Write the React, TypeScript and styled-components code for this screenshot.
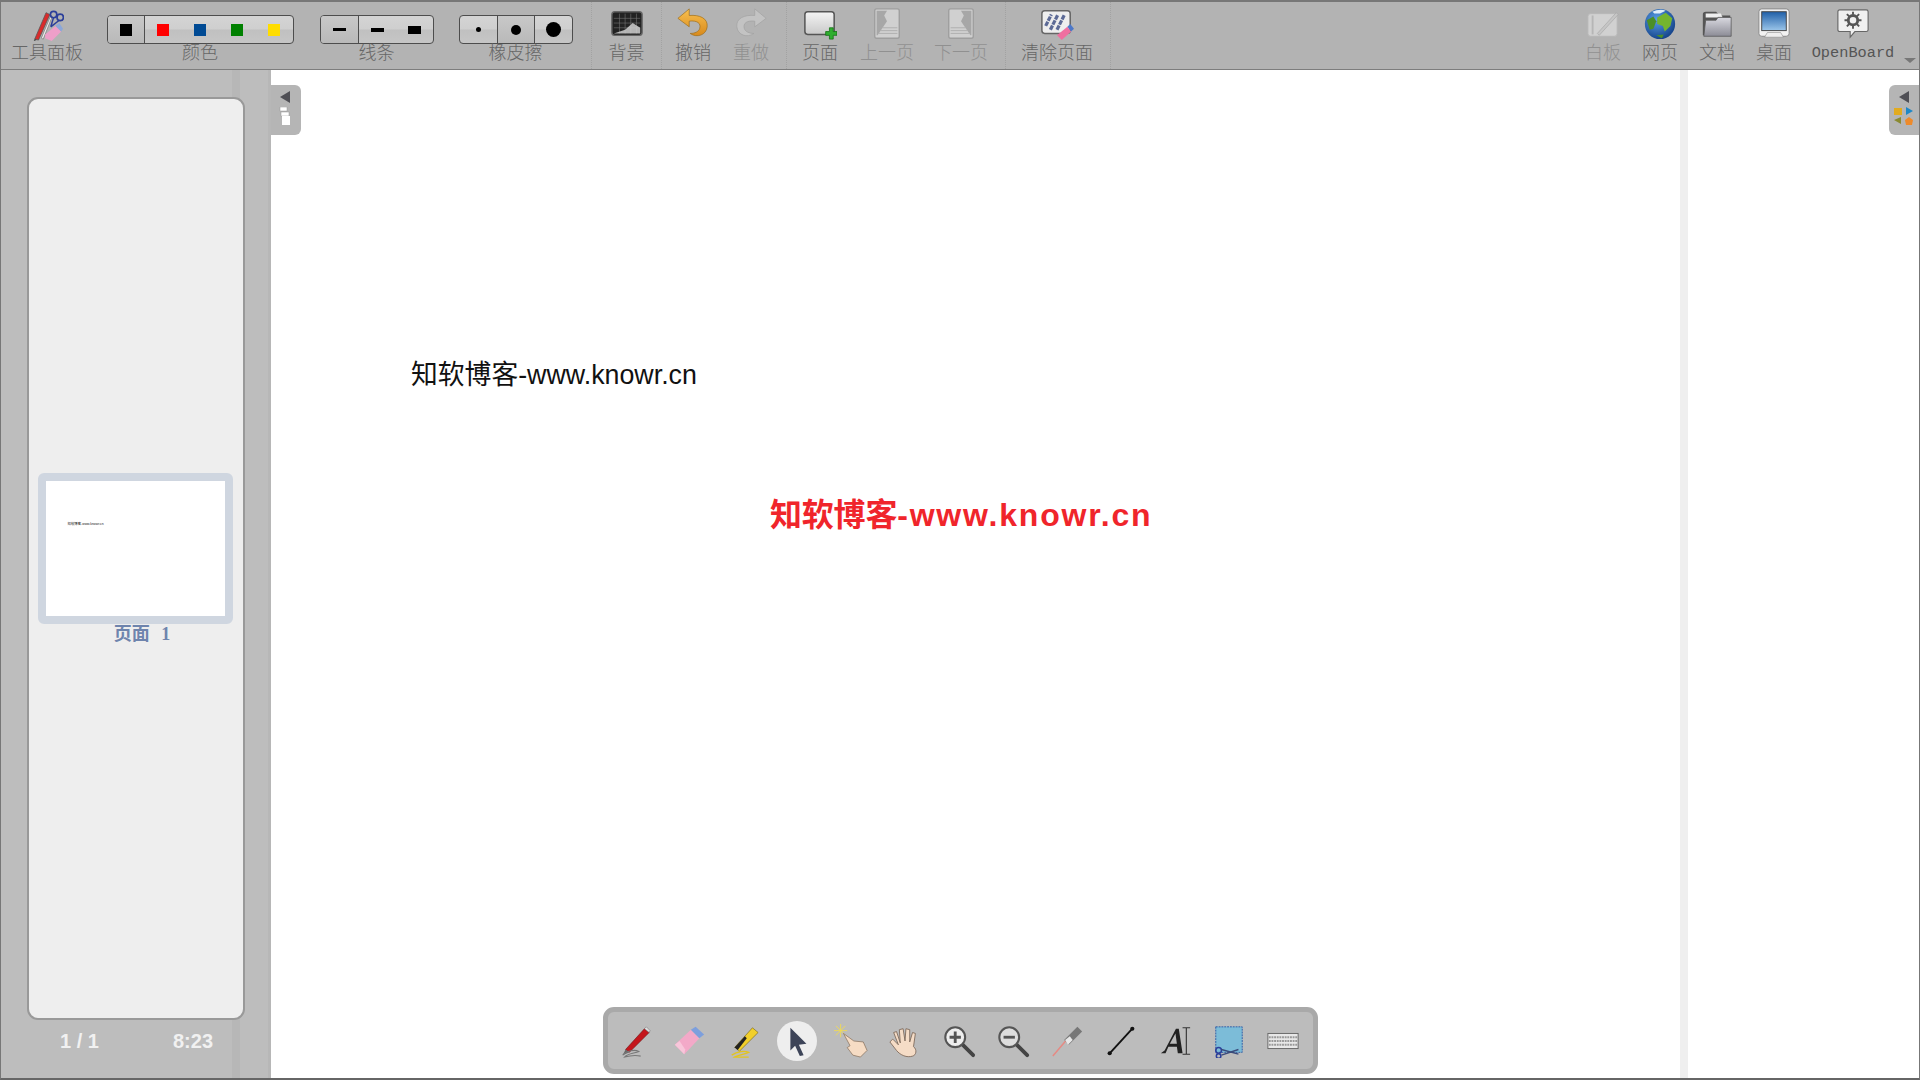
import React from "react";
import styled, { createGlobalStyle } from "styled-components";

const Global = createGlobalStyle`
  html, body { margin: 0; padding: 0; background: #fff; }
  #root { width: 1920px; height: 1080px; }
`;

const Page = styled.div`
  width: 1920px; height: 1080px; box-sizing: border-box; overflow: hidden;
  display: flex; flex-direction: column; position: relative;
  border-left: 1px solid #777; border-right: 1px solid #777; border-bottom: 2px solid #666;
  font-family: "Liberation Serif", "Noto Sans CJK SC", serif;
`;
const TopBar = styled.header`
  height: 70px; flex: none; box-sizing: border-box; display: flex;
  background: #b3b3b3; border-top: 2px solid #777; border-bottom: 1px solid #7d7d7d;
`;
const Section = styled.div<{ $dotted?: boolean; $push?: boolean; $end?: number; $close?: boolean }>`
  display: flex; height: 100%;
  margin-left: ${p => (p.$push ? "auto" : "0")};
  padding-right: ${p => p.$end ?? 0}px;
  border-left: ${p => (p.$dotted ? "1px dotted #a2a2a2" : "0")};
  border-right: ${p => (p.$close ? "1px dotted #a2a2a2" : "0")};
`;
const Tool = styled.div<{ $w: number; $off?: boolean }>`
  width: ${p => p.$w}px; flex: none; display: flex; flex-direction: column; align-items: center;
  opacity: ${p => (p.$off ? 0.45 : 1)};
`;
const IconSlot = styled.div`
  height: 32px; padding-top: 6px; display: flex; align-items: center; justify-content: center;
`;
const Label = styled.span`
  font-size: 18px; line-height: 24px; font-weight: 300; color: #666; white-space: nowrap; margin-top: 1px;
`;
const GroupLabel = styled(Label)`
  margin-top: -3px;
`;
const MonoLabel = styled(Label)`
  font-family: "Liberation Mono", monospace; font-size: 15.3px; color: #555;
`;
const GroupTool = styled(Tool)`
  padding-top: 13px; box-sizing: border-box;
`;
const Segmented = styled.div`
  height: 29px; flex: none; box-sizing: border-box; display: flex; border: 1px solid #4d4d4d; border-radius: 4px; overflow: hidden;
  background: linear-gradient(#d4d4d4 0, #cfcfcf 48%, #c0c0c0 52%, #c6c6c6 100%);
`;
const Cell = styled.div<{ $w: number; $on?: boolean; $line?: boolean }>`
  width: ${p => p.$w}px; display: flex; align-items: center; justify-content: center; box-sizing: border-box;
  border-right: ${p => (p.$line ? "1px solid #4d4d4d" : "0")};
  background: ${p => (p.$on ? "linear-gradient(#c8c8c8, #b9b9b9)" : "none")};
`;
const Swatch = styled.i<{ $c: string }>`
  display: block; width: 12px; height: 12px; background: ${p => p.$c};
`;
const Stroke = styled.i<{ $h: number }>`
  display: block; width: 13px; height: ${p => p.$h}px; background: #000;
`;
const Dot = styled.i<{ $s: number }>`
  display: block; width: ${p => p.$s}px; height: ${p => p.$s}px; background: #000; border-radius: 50%;
`;
const Caret = styled.div`
  width: 16px; padding-top: 56px; box-sizing: border-box;
  &::after { content: ""; display: block; width: 0; height: 0; margin-left: 1px;
    border-left: 6px solid transparent; border-right: 6px solid transparent; border-top: 5px solid #777; }
`;
const Body = styled.div`
  flex: 1; display: flex; min-height: 0; position: relative;
`;
const Sidebar = styled.aside`
  width: 270px; flex: none; box-sizing: border-box; padding: 27px 0 0 26px; display: flex; flex-direction: column;
  background: linear-gradient(90deg, #bdbdbd 231px, #b7b7b7 231px 239px, #bdbdbd 239px 267px, #b7b7b7 267px);
`;
const ThumbPanel = styled.div`
  width: 218px; height: 923px; flex: none; box-sizing: border-box; display: flex; flex-direction: column; align-items: center; justify-content: center;
  background: #eee; border: 2px solid #999; border-radius: 11px;
`;
const Thumb = styled.div`
  width: 195px; height: 151px; box-sizing: border-box; position: relative; background: #fff;
  border: 8px solid #cfd6e0; border-radius: 6px; margin-right: 2px;
`;
const ThumbText = styled.span`
  position: absolute; left: 22px; top: 41px; font-family: "Liberation Sans", "Noto Sans CJK SC", sans-serif; font-size: 3.4px; line-height: 5px; color: #222; white-space: nowrap;
`;
const ThumbLabel = styled.span`
  font-size: 18px; line-height: 20px; font-weight: 700; color: #6e84ad; margin: 0 0 0 12px; word-spacing: 7px;
`;
const Pager = styled.div`
  flex: 1; display: flex; align-items: center; font-family: "Liberation Sans", sans-serif; font-weight: 700; font-size: 20px; color: #f1f1f1; padding-bottom: 16px;
`;
const PagerLeft = styled.span`
  width: 146px; padding-left: 33px; box-sizing: border-box; white-space: nowrap;
`;
const Canvas = styled.main`
  flex: 1; background: #fff; position: relative; overflow: hidden;
`;
const Gutter = styled.div`
  position: absolute; left: 1409px; top: 0; bottom: 0; width: 8px; background: #efefef;
`;
const CanvasText = styled.div`
  position: absolute; left: 140px; top: 287px; font-family: "Liberation Sans", "Noto Sans CJK SC", sans-serif; font-size: 26.8px; line-height: 36px; color: #111; white-space: nowrap;
`;
const Watermark = styled.div`
  position: absolute; left: 499px; top: 423px; font-family: "DejaVu Sans", "Noto Sans CJK SC", sans-serif; font-weight: 700; font-size: 32px; line-height: 44px; letter-spacing: -0.2px; color: #f0252b; white-space: nowrap;
`;
const WatermarkLatin = styled.span`
  font-family: "Liberation Sans", sans-serif; letter-spacing: 1.8px;
`;
const Handle = styled.div<{ $side: "left" | "right" }>`
  position: absolute; top: 15px; width: 30px; height: 50px; box-sizing: border-box; background: #b5b5b5;
  display: flex; flex-direction: column; align-items: center; padding-top: 6px; gap: 4px;
  ${p => (p.$side === "left" ? "left: 270px; padding-right: 2px; border-radius: 0 6px 6px 0;" : "right: 0; border-radius: 6px 0 0 6px;")}
`;
const Palette = styled.div`
  position: absolute; left: 602px; top: 937px; width: 715px; height: 67px; box-sizing: border-box;
  display: flex; align-items: center;
  background: #bcbcbc; border: 5px solid #a9a9a9; border-radius: 11px;
`;
const PaletteButton = styled.div<{ $on?: boolean }>`
  width: 54px; height: 40px; flex: none; display: flex; align-items: center; justify-content: center; position: relative;
  &::before { content: ""; display: ${p => (p.$on ? "block" : "none")}; position: absolute; left: 7px; top: 0; width: 40px; height: 40px; border-radius: 50%; background: #eee; }
  & > svg { position: relative; }
`;

const Ico = ({ s = 34, children }: { s?: number; children: React.ReactNode }) => (
  <svg width={s} height={s} viewBox="0 0 36 36" fill="none">{children}</svg>
);

const Defs = () => (
  <svg width="0" height="0" style={{ position: "absolute" }}>
    <defs>
      <linearGradient id="paper" x1="0" y1="0" x2="0" y2="1"><stop offset="0" stopColor="#f4f4f4" /><stop offset="1" stopColor="#c9c9c9" /></linearGradient>
      <linearGradient id="screen" x1="0" y1="0" x2="0" y2="1"><stop offset="0" stopColor="#1f5fa8" /><stop offset="1" stopColor="#9cc6ea" /></linearGradient>
      <linearGradient id="folder" x1="0" y1="0" x2="0" y2="1"><stop offset="0" stopColor="#d9d9e0" /><stop offset="1" stopColor="#8c8c96" /></linearGradient>
      <linearGradient id="undo" x1="0" y1="0" x2="0" y2="1"><stop offset="0" stopColor="#f8c050" /><stop offset="1" stopColor="#d98a1c" /></linearGradient>
      <radialGradient id="globe" cx=".4" cy=".35" r=".7"><stop offset="0" stopColor="#5aa0e8" /><stop offset="1" stopColor="#123f86" /></radialGradient>
    </defs>
  </svg>
);

const IToolbox = () => (
  <Ico>
    <path d="M5 34 L17 6 L21 8 L9 35 Z" fill="#d92b2b" stroke="#555" strokeWidth=".8" />
    <path d="M5 34 L4 36 L7 35 Z" fill="#333" />
    <path d="M12 33 L22 9 L23.5 10 L14 34 Z" fill="#eee" stroke="#666" strokeWidth=".6" />
    <circle cx="25" cy="8" r="3.4" stroke="#2b3f9a" strokeWidth="1.8" />
    <circle cx="32" cy="11" r="3.4" stroke="#2b3f9a" strokeWidth="1.8" />
    <path d="M25 11 L22 21 M31 14 L22 21" stroke="#2b3f9a" strokeWidth="1.6" />
    <path d="M16 29 L27 20 L33 26 L23 36 L16 33 Z" fill="#ee9fc9" />
    <path d="M27 20 L31 17 L35 23 L33 26 Z" fill="#8ba7d9" />
  </Ico>
);
const IBackground = () => (
  <Ico>
    <rect x="2" y="5" width="32" height="25" rx="3" fill="#222" stroke="#666" strokeWidth="1.5" />
    <path d="M4 12 H32 M4 17 H32 M4 22 H32 M10 7 V28 M16 7 V28 M22 7 V28 M28 7 V28" stroke="#777" strokeWidth=".6" />
    <path d="M4 28 L16 24 L24 17 L32 22 V28 Z" fill="#cfcfcf" opacity=".85" />
  </Ico>
);
const IUndo = () => (
  <Ico>
    <path d="M14 2 L2 12 L14 21 V15 C22 14 27 17 25 23 C24 26 20 28 15 28 C22 33 32 30 33 21 C34 12 25 8 14 9 Z" fill="url(#undo)" stroke="#9a6a18" strokeWidth=".7" />
  </Ico>
);
const IRedo = () => (
  <Ico>
    <path d="M22 2 L34 12 L22 21 V15 C14 14 9 17 11 23 C12 26 16 28 21 28 C14 33 4 30 3 21 C2 12 11 8 22 9 Z" fill="#d8d8d8" stroke="#8a8a8a" strokeWidth=".7" />
  </Ico>
);
const IPageAdd = () => (
  <Ico>
    <rect x="2" y="5" width="31" height="24" rx="3" fill="url(#paper)" stroke="#555" strokeWidth="1.6" />
    <path d="M24 26 H28 V22 H32 V26 H36 V30 H32 V34 H28 V30 H24 Z" fill="#2fae2f" stroke="#116d11" strokeWidth=".8" />
  </Ico>
);
const IPrev = () => (
  <Ico>
    <rect x="5" y="2" width="26" height="31" rx="2" fill="#f3f3f3" stroke="#888" strokeWidth="1.5" />
    <path d="M7 4 H18 L15 9 L18 15 L8 30 H7 Z" fill="#9a9a9a" />
    <path d="M13 22 H29 M11 25 H29 M9 28 H29" stroke="#aaa" />
  </Ico>
);
const INext = () => (
  <Ico>
    <rect x="5" y="2" width="26" height="31" rx="2" fill="#f3f3f3" stroke="#888" strokeWidth="1.5" />
    <path d="M29 4 H18 L21 9 L18 15 L28 30 H29 Z" fill="#9a9a9a" />
    <path d="M7 22 H23 M7 25 H25 M7 28 H27" stroke="#aaa" />
  </Ico>
);
const IClear = () => (
  <Ico>
    <rect x="2" y="4" width="30" height="24" rx="3" fill="#eee" stroke="#666" strokeWidth="1.6" />
    <path d="M6 20 L12 8 M11 24 L19 8 M18 24 L26 8" stroke="#5c6a96" strokeWidth="3.4" strokeDasharray="5 1" />
    <path d="M18 30 L29 21 L33 26 L23 35 Z" fill="#ef6fa0" />
    <path d="M29 21 L32 18 L36 23 L33 26 Z" fill="#4d78c8" />
  </Ico>
);
const IBoard = () => (
  <Ico>
    <rect x="2" y="7" width="31" height="24" rx="3" fill="#f6f6f6" stroke="#bbb" />
    <path d="M7 9 V29" stroke="#bbb" strokeWidth="2" />
    <path d="M12 28 L32 6 L34 8 L14 30 Z" fill="#ddd" stroke="#999" strokeWidth=".7" />
  </Ico>
);
const IGlobe = () => (
  <Ico>
    <circle cx="18" cy="18" r="16" fill="url(#globe)" />
    <path d="M15 11 L24 6 L31 12 L29 20 L23 26 L21 20 L15 18 Z" fill="#74b52f" />
    <path d="M4 14 L11 10 L14 15 L11 23 L7 24 Z" fill="#4b8f27" />
    <path d="M10 5 C14 3 20 2 24 4 L18 7 L12 7 Z" fill="#dfeefc" />
    <path d="M14 30 L22 29 L20 33 Z" fill="#4b8f27" />
  </Ico>
);
const IFolder = () => (
  <Ico>
    <path d="M3 8 C3 6 4 5 6 5 H17 L21 9 H32 V30 H3 Z" fill="#555" />
    <path d="M6 7 H22 L24 11 H6 Z" fill="#eee" />
    <path d="M4 31 L6 14 H17 L19 11 H33 V31 Z" fill="url(#folder)" stroke="#555" strokeWidth=".8" />
  </Ico>
);
const IDesktop = () => (
  <Ico>
    <rect x="2" y="2" width="32" height="29" rx="3" fill="#f2f2f2" stroke="#888" />
    <rect x="5" y="5" width="26" height="20" fill="url(#screen)" stroke="#444" />
    <path d="M8 32 L11 27 H25 L28 32 Z" fill="#eee" stroke="#888" strokeWidth=".6" />
  </Ico>
);
const ISettings = () => (
  <Ico>
    <path d="M4 3 H32 Q34 3 34 5 V24 Q34 26 32 26 H20 L15 32 V26 H4 Q2 26 2 24 V5 Q2 3 4 3 Z" fill="#f0f0f0" stroke="#666" strokeWidth="1.2" />
    <circle cx="18" cy="14" r="5" stroke="#555" strokeWidth="3" />
    <path d="M18 5 V8 M18 20 V23 M9 14 H12 M24 14 H27 M11.5 7.5 L14 10 M22 18 L24.5 20.5 M24.5 7.5 L22 10 M14 18 L11.5 20.5" stroke="#555" strokeWidth="2" />
  </Ico>
);
const IPen = () => (
  <Ico>
    <path d="M8 27 L28 5 L33 9 L12 30 Z" fill="#c4161c" stroke="#6a0d10" strokeWidth=".6" />
    <path d="M28 5 L30 3 L34 7 L33 9 Z" fill="#ddd" stroke="#666" strokeWidth=".5" />
    <path d="M8 27 L5 33 L12 30 Z" fill="#666" />
    <path d="M5 33 C9 28 18 27 22 29 C18 31 10 31 7 35 C14 33 20 33 24 34" stroke="#777" strokeWidth="1.2" />
  </Ico>
);
const IEraser = () => (
  <Ico>
    <path d="M3 22 L20 6 L29 15 L13 32 Z" fill="#f3a9c8" />
    <path d="M3 22 L13 32 L14 27 L8 18 Z" fill="#f8c6da" />
    <path d="M20 6 L25 3 L34 11 L29 15 Z" fill="#7d9fdd" />
  </Ico>
);
const IHighlighter = () => (
  <Ico>
    <path d="M9 25 L28 4 L34 9 L14 29 Z" fill="#f1cf2a" stroke="#6b5a12" strokeWidth=".6" />
    <path d="M9 25 L20 13 L22 15 L12 28 Z" fill="#222" />
    <path d="M9 25 L5 32 L14 29 Z" fill="#bbb" />
    <path d="M6 33 C12 29 20 28 24 30 C20 32 12 33 9 35 H24" stroke="#e2c420" strokeWidth="1.4" />
  </Ico>
);
const IArrow = () => (
  <Ico>
    <path d="M11 4 L28 21 L20 22 L25 33 L21 34 L16 23 L11 28 Z" fill="#3d4458" />
  </Ico>
);
const ILaserHand = () => (
  <Ico>
    <path d="M7 0 V14 M0 7 H14 M2 2 L12 12 M12 2 L2 12" stroke="#eed95a" strokeWidth="1" />
    <path d="M10 10 L21 18 L31 19 L35 28 L28 35 L20 33 L14 25 L17 23 Z" fill="#f6dcc4" stroke="#8a735f" strokeWidth=".8" />
  </Ico>
);
const IHand = () => (
  <Ico>
    <path d="M9 8 L13 20 L12 6 L16 5 L18 18 L19 5 L23 6 L23 19 L26 9 L29 10 L27 24 C31 27 30 33 26 34 C20 36 13 33 9 28 L2 19 L5 16 L11 22 L6 9 Z" fill="#f5dcc6" stroke="#7b6656" strokeWidth=".9" />
  </Ico>
);
const IZoomIn = () => (
  <Ico>
    <path d="M21 21 L33 33" stroke="#444" strokeWidth="4" strokeLinecap="round" />
    <circle cx="14" cy="14" r="10.5" fill="#eee" stroke="#555" strokeWidth="2.2" />
    <path d="M14 8 V20 M8 14 H20" stroke="#555" strokeWidth="3" />
  </Ico>
);
const IZoomOut = () => (
  <Ico>
    <path d="M21 21 L33 33" stroke="#444" strokeWidth="4" strokeLinecap="round" />
    <circle cx="14" cy="14" r="10.5" fill="#ddd" stroke="#555" strokeWidth="2.2" />
    <path d="M8 14 H20" stroke="#555" strokeWidth="3" />
  </Ico>
);
const ILaser = () => (
  <Ico>
    <path d="M3 34 L19 15" stroke="#e58a84" strokeWidth="1.6" />
    <path d="M15 17 L29 3 L34 8 L20 22 Z" fill="#777" />
    <path d="M16 17 L21 13 L24 17 L19 22 Z" fill="#e8e8e8" />
  </Ico>
);
const ILine = () => (
  <Ico>
    <path d="M6 31 L30 5" stroke="#111" strokeWidth="2" />
    <circle cx="6" cy="31" r="2.2" fill="#111" />
    <circle cx="30" cy="5" r="2.2" fill="#111" />
  </Ico>
);
const IText = () => (
  <Ico>
    <path d="M3 31 H8 L11 24 H20 L21 31 H26 L22 5 H19 L7 28 Z M12.5 21 L18.5 10 L20 21 Z" fill="#222" />
    <path d="M26 4 H34 M30 4 V32 M26 32 H34" stroke="#333" strokeWidth="1.2" />
  </Ico>
);
const ICapture = () => (
  <Ico>
    <rect x="4" y="3" width="28" height="27" fill="#7cbcd8" stroke="#2a5aa5" strokeWidth="1" strokeDasharray="2 1" />
    <circle cx="7" cy="28" r="3" stroke="#2b3f9a" strokeWidth="1.6" />
    <circle cx="7" cy="34" r="2.4" stroke="#2b3f9a" strokeWidth="1.6" />
    <path d="M10 27 L28 32 M10 33 L28 27" stroke="#3a4a7a" strokeWidth="1.4" />
  </Ico>
);
const IKeyboard = () => (
  <Ico>
    <rect x="2" y="10" width="32" height="16" fill="#e8e8e8" stroke="#666" />
    <path d="M3 14 H33 M3 18 H33 M3 22 H33" stroke="#999" strokeDasharray="2 .8" strokeWidth="2" />
  </Ico>
);

const colors = ["#000", "#f00", "#004a94", "#008000", "#ffdd00"];
const paletteIcons = [IPen, IEraser, IHighlighter, IArrow, ILaserHand, IHand, IZoomIn, IZoomOut, ILaser, ILine, IText, ICapture, IKeyboard];

const Triangle = () => (
  <svg width="10" height="12" viewBox="0 0 10 12"><path d="M10 0 V12 L0 6 Z" fill="#4f4f55" /></svg>
);
const PagesGlyph = () => (
  <svg width="12" height="20" viewBox="0 0 12 20">
    <rect x="1" y="0" width="7" height="4" fill="#fff" stroke="#999" strokeWidth=".5" />
    <rect x="2" y="5" width="8" height="4" fill="#fff" stroke="#999" strokeWidth=".5" />
    <rect x="3" y="9" width="8" height="9" fill="#fff" />
  </svg>
);
const LibraryGlyph = () => (
  <svg width="20" height="18" viewBox="0 0 20 18">
    <rect x="0" y="1" width="8" height="7" fill="#e2ab1f" />
    <path d="M12 0 L19 4 L12 8 Z" fill="#1e88c8" />
    <path d="M0 13 L7 10 V17 Z" fill="#8a8a30" />
    <path d="M15 10 L19 13 L18 18 H12 L11 13 Z" fill="#ee8a2a" />
  </svg>
);

export default function App() {
  return (
    <Page>
      <Global />
      <Defs />
      <TopBar>
        <Section $end={6}>
          <Tool $w={92}><IconSlot><IToolbox /></IconSlot><Label>工具面板</Label></Tool>
          <GroupTool $w={214}>
            <Segmented>
              {colors.map((c, i) => (
                <Cell key={c} $w={37} $on={i === 0} $line={i === 0}><Swatch $c={c} /></Cell>
              ))}
            </Segmented>
            <GroupLabel>颜色</GroupLabel>
          </GroupTool>
          <GroupTool $w={139}>
            <Segmented>
              <Cell $w={38} $on $line><Stroke $h={3} /></Cell>
              <Cell $w={37}><Stroke $h={4} /></Cell>
              <Cell $w={37}><Stroke $h={8} /></Cell>
            </Segmented>
            <GroupLabel>线条</GroupLabel>
          </GroupTool>
          <GroupTool $w={139}>
            <Segmented>
              <Cell $w={38} $line><Dot $s={5} /></Cell>
              <Cell $w={37} $on $line><Dot $s={10} /></Cell>
              <Cell $w={37}><Dot $s={15} /></Cell>
            </Segmented>
            <GroupLabel>橡皮擦</GroupLabel>
          </GroupTool>
        </Section>
        <Section $dotted>
          <Tool $w={69}><IconSlot><IBackground /></IconSlot><Label>背景</Label></Tool>
        </Section>
        <Section $dotted $end={8}>
          <Tool $w={62}><IconSlot><IUndo /></IconSlot><Label>撤销</Label></Tool>
          <Tool $w={54} $off><IconSlot><IRedo /></IconSlot><Label>重做</Label></Tool>
        </Section>
        <Section $dotted $end={4}>
          <Tool $w={66}><IconSlot><IPageAdd /></IconSlot><Label>页面</Label></Tool>
          <Tool $w={68} $off><IconSlot><IPrev /></IconSlot><Label>上一页</Label></Tool>
          <Tool $w={80} $off><IconSlot><INext /></IconSlot><Label>下一页</Label></Tool>
        </Section>
        <Section $dotted $close $end={2}>
          <Tool $w={102}><IconSlot><IClear /></IconSlot><Label>清除页面</Label></Tool>
        </Section>
        <Section $push>
          <Tool $w={56} $off><IconSlot><IBoard /></IconSlot><Label>白板</Label></Tool>
          <Tool $w={58}><IconSlot><IGlobe /></IconSlot><Label>网页</Label></Tool>
          <Tool $w={56}><IconSlot><IFolder /></IconSlot><Label>文档</Label></Tool>
          <Tool $w={58}><IconSlot><IDesktop /></IconSlot><Label>桌面</Label></Tool>
          <Tool $w={100}><IconSlot><ISettings /></IconSlot><MonoLabel>OpenBoard</MonoLabel></Tool>
          <Caret />
        </Section>
      </TopBar>
      <Body>
        <Sidebar>
          <ThumbPanel>
            <Thumb><ThumbText>知软博客-www.knowr.cn</ThumbText></Thumb>
            <ThumbLabel>页面 1</ThumbLabel>
          </ThumbPanel>
          <Pager>
            <PagerLeft>1 / 1</PagerLeft>
            <span>8:23</span>
          </Pager>
        </Sidebar>
        <Canvas>
          <Gutter />
          <CanvasText>知软博客-www.knowr.cn</CanvasText>
          <Watermark>知软博客<WatermarkLatin>-www.knowr.cn</WatermarkLatin></Watermark>
        </Canvas>
        <Handle $side="left"><Triangle /><PagesGlyph /></Handle>
        <Handle $side="right"><Triangle /><LibraryGlyph /></Handle>
        <Palette>
          {paletteIcons.map((I, i) => (
            <PaletteButton key={i} $on={i === 3}><I /></PaletteButton>
          ))}
        </Palette>
      </Body>
    </Page>
  );
}
